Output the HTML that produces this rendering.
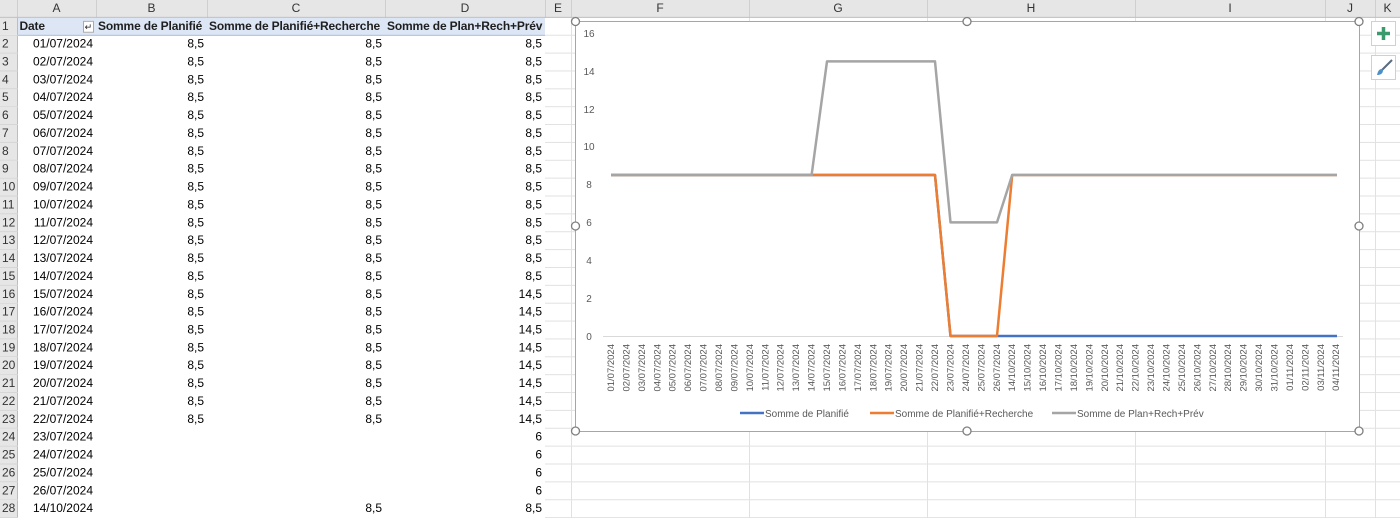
<!DOCTYPE html>
<html><head><meta charset="utf-8"><style>
*{margin:0;padding:0;box-sizing:border-box}
body{width:1400px;height:507px;overflow:hidden;background:#fff;font-family:"Liberation Sans",sans-serif;position:relative}
.wrap{position:absolute;left:0;top:0;width:1400px;transform:scaleY(0.9925);transform-origin:0 0}
table{border-collapse:collapse;table-layout:fixed;width:1400px;font-size:12px;color:#000}
td{height:18px;padding:0 3px;white-space:nowrap;overflow:hidden;line-height:17px}
tr.h td{height:17px;background:#e6e6e6;color:#333;text-align:center;border-right:1px solid #cfcfcf;border-bottom:1px solid #bdbdbd;font-size:12px}
td.rh{background:#e6e6e6;color:#333;text-align:left;padding-left:2px;border-bottom:1px solid #d4d4d4;border-right:1px solid #bdbdbd;font-size:12px}
td.g{border-right:1px solid #e1e1e1;border-bottom:1px solid #e1e1e1}
td.r{text-align:right}
tr.p1 td.c{background:#dde6f5;font-weight:bold;border-bottom:1px solid #9bb3dc;color:#1f1f1f;font-size:12px;letter-spacing:-0.15px;padding:0 2px}
</style></head><body>
<div class="wrap">
<table>
<colgroup><col style="width:17px"><col style="width:79px"><col style="width:111px"><col style="width:178px"><col style="width:160px"><col style="width:26px"><col style="width:178px"><col style="width:178px"><col style="width:208px"><col style="width:190px"><col style="width:50px"><col style="width:25px"></colgroup>
<tr class="h"><td></td><td>A</td><td>B</td><td>C</td><td>D</td><td>E</td><td>F</td><td>G</td><td>H</td><td>I</td><td>J</td><td>K</td></tr>
<tr class="p1"><td class="rh">1</td><td class="c">Date <span style="float:right;font-weight:normal;font-size:9px;border:1px solid #aaa;background:#fff;line-height:10px;margin-top:3px;padding:0 1px">↵</span></td><td class="c">Somme de Planifié</td><td class="c">Somme de Planifié+Recherche</td><td class="c">Somme de Plan+Rech+Prév</td><td class="g"></td><td class="g"></td><td class="g"></td><td class="g"></td><td class="g"></td><td class="g"></td><td class="g"></td></tr>
<tr><td class="rh">2</td><td class="r">01/07/2024</td><td class="r">8,5</td><td class="r">8,5</td><td class="r">8,5</td><td class="g"></td><td class="g"></td><td class="g"></td><td class="g"></td><td class="g"></td><td class="g"></td><td class="g"></td></tr>
<tr><td class="rh">3</td><td class="r">02/07/2024</td><td class="r">8,5</td><td class="r">8,5</td><td class="r">8,5</td><td class="g"></td><td class="g"></td><td class="g"></td><td class="g"></td><td class="g"></td><td class="g"></td><td class="g"></td></tr>
<tr><td class="rh">4</td><td class="r">03/07/2024</td><td class="r">8,5</td><td class="r">8,5</td><td class="r">8,5</td><td class="g"></td><td class="g"></td><td class="g"></td><td class="g"></td><td class="g"></td><td class="g"></td><td class="g"></td></tr>
<tr><td class="rh">5</td><td class="r">04/07/2024</td><td class="r">8,5</td><td class="r">8,5</td><td class="r">8,5</td><td class="g"></td><td class="g"></td><td class="g"></td><td class="g"></td><td class="g"></td><td class="g"></td><td class="g"></td></tr>
<tr><td class="rh">6</td><td class="r">05/07/2024</td><td class="r">8,5</td><td class="r">8,5</td><td class="r">8,5</td><td class="g"></td><td class="g"></td><td class="g"></td><td class="g"></td><td class="g"></td><td class="g"></td><td class="g"></td></tr>
<tr><td class="rh">7</td><td class="r">06/07/2024</td><td class="r">8,5</td><td class="r">8,5</td><td class="r">8,5</td><td class="g"></td><td class="g"></td><td class="g"></td><td class="g"></td><td class="g"></td><td class="g"></td><td class="g"></td></tr>
<tr><td class="rh">8</td><td class="r">07/07/2024</td><td class="r">8,5</td><td class="r">8,5</td><td class="r">8,5</td><td class="g"></td><td class="g"></td><td class="g"></td><td class="g"></td><td class="g"></td><td class="g"></td><td class="g"></td></tr>
<tr><td class="rh">9</td><td class="r">08/07/2024</td><td class="r">8,5</td><td class="r">8,5</td><td class="r">8,5</td><td class="g"></td><td class="g"></td><td class="g"></td><td class="g"></td><td class="g"></td><td class="g"></td><td class="g"></td></tr>
<tr><td class="rh">10</td><td class="r">09/07/2024</td><td class="r">8,5</td><td class="r">8,5</td><td class="r">8,5</td><td class="g"></td><td class="g"></td><td class="g"></td><td class="g"></td><td class="g"></td><td class="g"></td><td class="g"></td></tr>
<tr><td class="rh">11</td><td class="r">10/07/2024</td><td class="r">8,5</td><td class="r">8,5</td><td class="r">8,5</td><td class="g"></td><td class="g"></td><td class="g"></td><td class="g"></td><td class="g"></td><td class="g"></td><td class="g"></td></tr>
<tr><td class="rh">12</td><td class="r">11/07/2024</td><td class="r">8,5</td><td class="r">8,5</td><td class="r">8,5</td><td class="g"></td><td class="g"></td><td class="g"></td><td class="g"></td><td class="g"></td><td class="g"></td><td class="g"></td></tr>
<tr><td class="rh">13</td><td class="r">12/07/2024</td><td class="r">8,5</td><td class="r">8,5</td><td class="r">8,5</td><td class="g"></td><td class="g"></td><td class="g"></td><td class="g"></td><td class="g"></td><td class="g"></td><td class="g"></td></tr>
<tr><td class="rh">14</td><td class="r">13/07/2024</td><td class="r">8,5</td><td class="r">8,5</td><td class="r">8,5</td><td class="g"></td><td class="g"></td><td class="g"></td><td class="g"></td><td class="g"></td><td class="g"></td><td class="g"></td></tr>
<tr><td class="rh">15</td><td class="r">14/07/2024</td><td class="r">8,5</td><td class="r">8,5</td><td class="r">8,5</td><td class="g"></td><td class="g"></td><td class="g"></td><td class="g"></td><td class="g"></td><td class="g"></td><td class="g"></td></tr>
<tr><td class="rh">16</td><td class="r">15/07/2024</td><td class="r">8,5</td><td class="r">8,5</td><td class="r">14,5</td><td class="g"></td><td class="g"></td><td class="g"></td><td class="g"></td><td class="g"></td><td class="g"></td><td class="g"></td></tr>
<tr><td class="rh">17</td><td class="r">16/07/2024</td><td class="r">8,5</td><td class="r">8,5</td><td class="r">14,5</td><td class="g"></td><td class="g"></td><td class="g"></td><td class="g"></td><td class="g"></td><td class="g"></td><td class="g"></td></tr>
<tr><td class="rh">18</td><td class="r">17/07/2024</td><td class="r">8,5</td><td class="r">8,5</td><td class="r">14,5</td><td class="g"></td><td class="g"></td><td class="g"></td><td class="g"></td><td class="g"></td><td class="g"></td><td class="g"></td></tr>
<tr><td class="rh">19</td><td class="r">18/07/2024</td><td class="r">8,5</td><td class="r">8,5</td><td class="r">14,5</td><td class="g"></td><td class="g"></td><td class="g"></td><td class="g"></td><td class="g"></td><td class="g"></td><td class="g"></td></tr>
<tr><td class="rh">20</td><td class="r">19/07/2024</td><td class="r">8,5</td><td class="r">8,5</td><td class="r">14,5</td><td class="g"></td><td class="g"></td><td class="g"></td><td class="g"></td><td class="g"></td><td class="g"></td><td class="g"></td></tr>
<tr><td class="rh">21</td><td class="r">20/07/2024</td><td class="r">8,5</td><td class="r">8,5</td><td class="r">14,5</td><td class="g"></td><td class="g"></td><td class="g"></td><td class="g"></td><td class="g"></td><td class="g"></td><td class="g"></td></tr>
<tr><td class="rh">22</td><td class="r">21/07/2024</td><td class="r">8,5</td><td class="r">8,5</td><td class="r">14,5</td><td class="g"></td><td class="g"></td><td class="g"></td><td class="g"></td><td class="g"></td><td class="g"></td><td class="g"></td></tr>
<tr><td class="rh">23</td><td class="r">22/07/2024</td><td class="r">8,5</td><td class="r">8,5</td><td class="r">14,5</td><td class="g"></td><td class="g"></td><td class="g"></td><td class="g"></td><td class="g"></td><td class="g"></td><td class="g"></td></tr>
<tr><td class="rh">24</td><td class="r">23/07/2024</td><td></td><td></td><td class="r">6</td><td class="g"></td><td class="g"></td><td class="g"></td><td class="g"></td><td class="g"></td><td class="g"></td><td class="g"></td></tr>
<tr><td class="rh">25</td><td class="r">24/07/2024</td><td></td><td></td><td class="r">6</td><td class="g"></td><td class="g"></td><td class="g"></td><td class="g"></td><td class="g"></td><td class="g"></td><td class="g"></td></tr>
<tr><td class="rh">26</td><td class="r">25/07/2024</td><td></td><td></td><td class="r">6</td><td class="g"></td><td class="g"></td><td class="g"></td><td class="g"></td><td class="g"></td><td class="g"></td><td class="g"></td></tr>
<tr><td class="rh">27</td><td class="r">26/07/2024</td><td></td><td></td><td class="r">6</td><td class="g"></td><td class="g"></td><td class="g"></td><td class="g"></td><td class="g"></td><td class="g"></td><td class="g"></td></tr>
<tr><td class="rh">28</td><td class="r">14/10/2024</td><td></td><td class="r">8,5</td><td class="r">8,5</td><td class="g"></td><td class="g"></td><td class="g"></td><td class="g"></td><td class="g"></td><td class="g"></td><td class="g"></td></tr>
</table>
</div>

<svg width="1400" height="507" style="position:absolute;left:0;top:0" font-family="Liberation Sans, sans-serif">
<rect x="575.5" y="21.5" width="784" height="410" fill="#fff" stroke="#a6a6a6"/>
<g font-size="10" fill="#595959" text-anchor="middle">
<text x="589" y="37">16</text><text x="589" y="75">14</text><text x="589" y="113">12</text><text x="589" y="150">10</text><text x="589" y="188">8</text><text x="589" y="226">6</text><text x="589" y="264">4</text><text x="589" y="302">2</text><text x="589" y="340">0</text>
</g>
<line x1="603" y1="336.5" x2="1343" y2="336.5" stroke="#d9d9d9"/>
<g font-size="9.5" fill="#595959" text-anchor="end">
<text transform="translate(614,344) rotate(-90)">01/07/2024</text>
<text transform="translate(629.4,344) rotate(-90)">02/07/2024</text>
<text transform="translate(644.9,344) rotate(-90)">03/07/2024</text>
<text transform="translate(660.3,344) rotate(-90)">04/07/2024</text>
<text transform="translate(675.7,344) rotate(-90)">05/07/2024</text>
<text transform="translate(691.2,344) rotate(-90)">06/07/2024</text>
<text transform="translate(706.6,344) rotate(-90)">07/07/2024</text>
<text transform="translate(722,344) rotate(-90)">08/07/2024</text>
<text transform="translate(737.4,344) rotate(-90)">09/07/2024</text>
<text transform="translate(752.9,344) rotate(-90)">10/07/2024</text>
<text transform="translate(768.3,344) rotate(-90)">11/07/2024</text>
<text transform="translate(783.7,344) rotate(-90)">12/07/2024</text>
<text transform="translate(799.2,344) rotate(-90)">13/07/2024</text>
<text transform="translate(814.6,344) rotate(-90)">14/07/2024</text>
<text transform="translate(830,344) rotate(-90)">15/07/2024</text>
<text transform="translate(845.5,344) rotate(-90)">16/07/2024</text>
<text transform="translate(860.9,344) rotate(-90)">17/07/2024</text>
<text transform="translate(876.3,344) rotate(-90)">18/07/2024</text>
<text transform="translate(891.7,344) rotate(-90)">19/07/2024</text>
<text transform="translate(907.2,344) rotate(-90)">20/07/2024</text>
<text transform="translate(922.6,344) rotate(-90)">21/07/2024</text>
<text transform="translate(938,344) rotate(-90)">22/07/2024</text>
<text transform="translate(953.5,344) rotate(-90)">23/07/2024</text>
<text transform="translate(968.9,344) rotate(-90)">24/07/2024</text>
<text transform="translate(984.3,344) rotate(-90)">25/07/2024</text>
<text transform="translate(999.8,344) rotate(-90)">26/07/2024</text>
<text transform="translate(1015.2,344) rotate(-90)">14/10/2024</text>
<text transform="translate(1030.6,344) rotate(-90)">15/10/2024</text>
<text transform="translate(1046,344) rotate(-90)">16/10/2024</text>
<text transform="translate(1061.5,344) rotate(-90)">17/10/2024</text>
<text transform="translate(1076.9,344) rotate(-90)">18/10/2024</text>
<text transform="translate(1092.3,344) rotate(-90)">19/10/2024</text>
<text transform="translate(1107.8,344) rotate(-90)">20/10/2024</text>
<text transform="translate(1123.2,344) rotate(-90)">21/10/2024</text>
<text transform="translate(1138.6,344) rotate(-90)">22/10/2024</text>
<text transform="translate(1154.1,344) rotate(-90)">23/10/2024</text>
<text transform="translate(1169.5,344) rotate(-90)">24/10/2024</text>
<text transform="translate(1184.9,344) rotate(-90)">25/10/2024</text>
<text transform="translate(1200.3,344) rotate(-90)">26/10/2024</text>
<text transform="translate(1215.8,344) rotate(-90)">27/10/2024</text>
<text transform="translate(1231.2,344) rotate(-90)">28/10/2024</text>
<text transform="translate(1246.6,344) rotate(-90)">29/10/2024</text>
<text transform="translate(1262.1,344) rotate(-90)">30/10/2024</text>
<text transform="translate(1277.5,344) rotate(-90)">31/10/2024</text>
<text transform="translate(1292.9,344) rotate(-90)">01/11/2024</text>
<text transform="translate(1308.4,344) rotate(-90)">02/11/2024</text>
<text transform="translate(1323.8,344) rotate(-90)">03/11/2024</text>
<text transform="translate(1339.2,344) rotate(-90)">04/11/2024</text>
</g>
<g fill="none" stroke-width="2.5" stroke-linejoin="round">
<polyline stroke="#4472c4" points="611,175 935,175 950.5,336 1337,336"/>
<polyline stroke="#ed7d31" points="611,175 935,175 950.5,336 997,336 1012.2,175 1337,175"/>
<polyline stroke="#a5a5a5" points="611,175 811.6,175 827,61.4 935,61.4 950.5,222.4 997,222.4 1012.2,175 1337,175"/>
</g>
<g font-size="10" fill="#595959">
<line x1="740" y1="413" x2="764" y2="413" stroke="#4472c4" stroke-width="2.5"/><text x="765" y="417">Somme de Planifié</text>
<line x1="870" y1="413" x2="894" y2="413" stroke="#ed7d31" stroke-width="2.5"/><text x="895" y="417">Somme de Planifié+Recherche</text>
<line x1="1052" y1="413" x2="1076" y2="413" stroke="#a5a5a5" stroke-width="2.5"/><text x="1077" y="417">Somme de Plan+Rech+Prév</text>
</g>
<g fill="#fff" stroke="#7f7f7f" stroke-width="1.3">
<circle cx="575.5" cy="21.5" r="4"/><circle cx="967" cy="21.5" r="4"/><circle cx="1359" cy="21.5" r="4"/>
<circle cx="575.5" cy="226" r="4"/><circle cx="1359" cy="226" r="4"/>
<circle cx="575.5" cy="431" r="4"/><circle cx="967" cy="431" r="4"/><circle cx="1359" cy="431" r="4"/>
</g>
<rect x="1371.5" y="21.5" width="24" height="24" fill="#fff" stroke="#d0d0d0"/>
<path d="M1383.5 27v13M1377 33.5h13" stroke="#3c9b6c" stroke-width="3.5"/>
<rect x="1371.5" y="55.5" width="24" height="24" fill="#fff" stroke="#d0d0d0"/>
<path d="M1392 60L1382 70" stroke="#5a6b80" stroke-width="2"/>
<path d="M1382 69c-3 0-4 2-5 6 3 0 6-1 6-5z" fill="#4a90c8"/>
</svg>
</body></html>
